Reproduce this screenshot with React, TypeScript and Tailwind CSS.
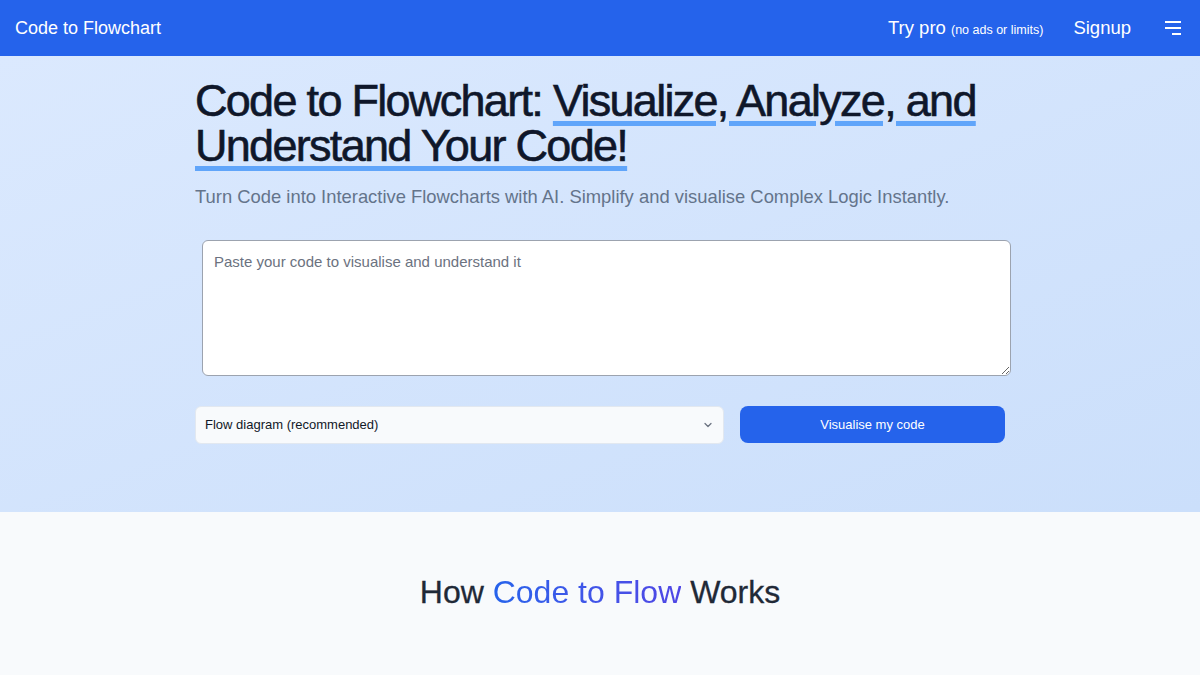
import React from "react";

export default function App() {
  return (
    <div className="min-h-screen w-full bg-[#f8fafc]" style={{ fontFamily: '"Liberation Sans", Arial, sans-serif' }}>
      <header className="h-14 bg-[#2563eb] flex items-center justify-between pl-[15px] pr-[18px] text-white">
        <div className="text-[18px]">Code to Flowchart</div>
        <div className="flex items-center">
          <div className="text-[18.5px]">
            Try pro <span className="text-[12.5px]">(no ads or limits)</span>
          </div>
          <div className="text-[18.5px] ml-[30px]">Signup</div>
          <svg className="ml-[33px]" width="18" height="16" viewBox="0 0 18 16">
            <rect x="1" y="1" width="16" height="2" fill="white" />
            <rect x="1" y="7" width="16" height="2" fill="white" />
            <rect x="8" y="13" width="9" height="2" fill="white" />
          </svg>
        </div>
      </header>
      <section className="h-[456px] bg-gradient-to-br from-[#dbe9fe] to-[#cbdffb]">
        <div className="w-[810px] mx-auto pt-[22px]">
          <h1 className="text-[45px] leading-[45px] text-[#0f172a] font-normal tracking-[-1.7px] [-webkit-text-stroke:0.6px_#0f172a]">
            Code to Flowchart:{" "}
            <span className="underline decoration-[#60a5fa] decoration-[5px] underline-offset-[5px]">
              Visualize, Analyze, and Understand Your Code!
            </span>
          </h1>
          <p className="mt-[15px] text-[18.4px] text-[#64748b]">
            Turn Code into Interactive Flowcharts with AI. Simplify and visualise Complex Logic Instantly.
          </p>
          <textarea
            className="mt-[29px] ml-[7px] block w-[809px] h-[136px] rounded-md border border-[#9ca3af] bg-white px-[11px] py-[10px] text-[15px] placeholder:text-[#6b7280] outline-none"
            placeholder="Paste your code to visualise and understand it"
          />
          <div className="mt-[30px] flex items-center gap-4">
            <div className="w-[529px] h-[38px] rounded-md border border-[#e2e8f0] bg-[#f8fafc] flex items-center justify-between px-[9px] text-[13px] text-[#111827]">
              <span>Flow diagram (recommended)</span>
              <svg width="12" height="12" viewBox="0 0 24 24" fill="none" stroke="#6b7280" strokeWidth="2.5" strokeLinecap="round" strokeLinejoin="round">
                <path d="M6 9l6 6 6-6" />
              </svg>
            </div>
            <button className="w-[265px] h-[37px] rounded-lg bg-[#2563eb] text-white text-[13px]">
              Visualise my code
            </button>
          </div>
        </div>
      </section>
      <section className="pt-[56px] pb-10 text-center">
        <h2 className="text-[32px] text-[#1f2937] [-webkit-text-stroke:0.3px_#1f2937]">
          How{" "}
          <span className="bg-gradient-to-r from-[#2563eb] to-[#4f46e5] bg-clip-text text-transparent [-webkit-text-stroke:0px]">Code to Flow</span>{" "}
          Works
        </h2>
      </section>
    </div>
  );
}
